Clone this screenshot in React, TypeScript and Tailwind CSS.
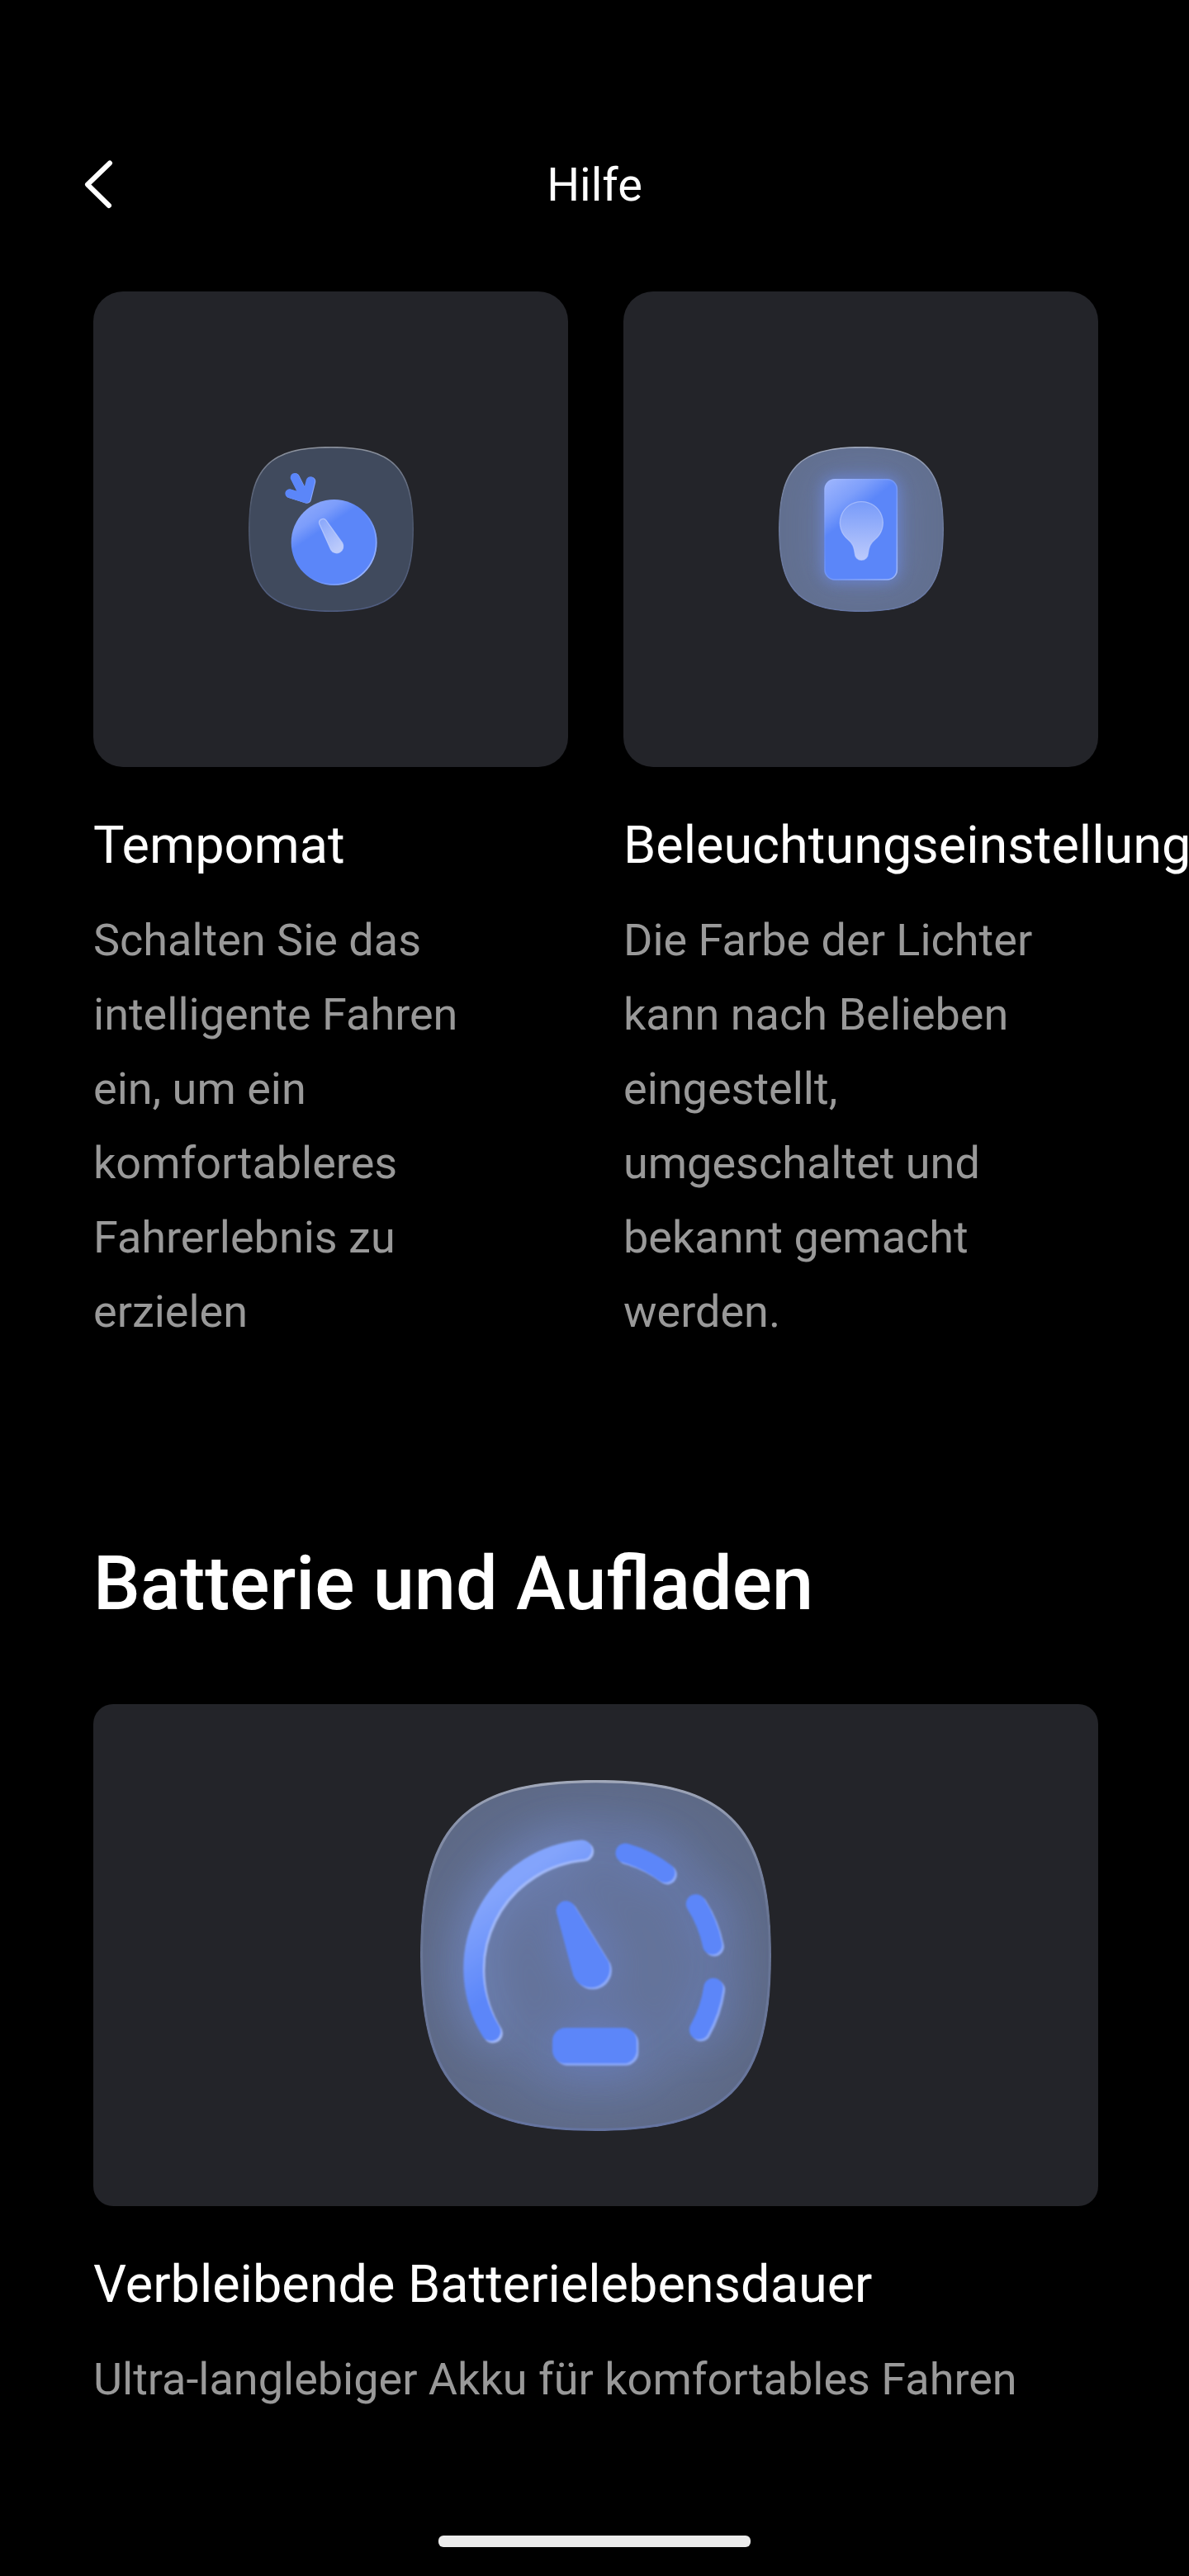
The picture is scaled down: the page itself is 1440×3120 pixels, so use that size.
import type { ReactNode } from 'react';

const SQUIRCLE =
  'M0 300C0 75 75 0 300 0C525 0 600 75 600 300C600 525 525 600 300 600C75 600 0 525 0 300Z';

type TileProps = {
  id: string;
  className: string;
  fill: string;
  children: ReactNode;
};

const Tile = ({ id, className, fill, children }: TileProps) => (
  <svg viewBox="0 0 600 600" className={className} aria-hidden="true">
    <defs>
      <clipPath id={`${id}-clip`}>
        <path d={SQUIRCLE} />
      </clipPath>
      <linearGradient id={`${id}-rim`} x1="0" y1="0" x2="0" y2="1">
        <stop offset="0" stopColor="#fff" stopOpacity="0.42" />
        <stop offset="0.4" stopColor="#b9c4e6" stopOpacity="0.1" />
        <stop offset="1" stopColor="#7389d6" stopOpacity="0.3" />
      </linearGradient>
    </defs>
    <g clipPath={`url(#${id}-clip)`}>
      <path d={SQUIRCLE} fill={fill} />
      {children}
      <path d={SQUIRCLE} fill="none" stroke={`url(#${id}-rim)`} strokeWidth="9" />
    </g>
  </svg>
);

const CruiseIcon = () => (
  <Tile id="cruise" className="size-[200px]" fill="#404a5d">
    <defs>
      <linearGradient id="cruise-dial" gradientUnits="userSpaceOnUse" x1="199" y1="199" x2="268" y2="302">
        <stop offset="0" stopColor="#8faafb" />
        <stop offset="0.6" stopColor="#7c9dfb" />
        <stop offset="1" stopColor="#5b86f9" />
      </linearGradient>
      <linearGradient id="cruise-edge" x1="0.3" y1="0.3" x2="0.95" y2="0.8">
        <stop offset="0.4" stopColor="#fff" stopOpacity="0" />
        <stop offset="1" stopColor="#fff" stopOpacity="0.4" />
      </linearGradient>
      <linearGradient id="cruise-needle" x1="0" y1="0" x2="0.6" y2="1">
        <stop offset="0" stopColor="#87a5fa" />
        <stop offset="1" stopColor="#bccbfb" />
      </linearGradient>
    </defs>
    <g fill="none" strokeWidth="32" strokeLinecap="round" strokeLinejoin="round">
      <path d="M170 113L208 188M228 126L212 190L151 171" stroke="#8aa7fa" />
      <path d="M168 112L206 187M225 125L209 189L149 170" stroke="#5b86f9" />
    </g>
    <circle cx="311" cy="348" r="156" fill="url(#cruise-dial)" />
    <circle cx="311" cy="348" r="153" fill="none" stroke="url(#cruise-edge)" strokeWidth="5" />
    <path
      d="M258 282A14 14 0 0 1 282 268L341 350A24 24 0 1 1 299 374Z"
      fill="url(#cruise-needle)"
      stroke="#c3d1fd"
      strokeOpacity="0.7"
      strokeWidth="4"
    />
  </Tile>
);

const LightIcon = () => (
  <Tile id="light" className="size-[200px]" fill="#627090">
    <defs>
      <filter id="light-glow" x="-60%" y="-60%" width="220%" height="220%">
        <feGaussianBlur stdDeviation="26" />
      </filter>
      <filter id="light-haze" x="-80%" y="-80%" width="260%" height="260%">
        <feGaussianBlur stdDeviation="70" />
      </filter>
      <linearGradient id="light-panel" gradientUnits="userSpaceOnUse" x1="205" y1="118" x2="294" y2="231">
        <stop offset="0" stopColor="#98b1fd" />
        <stop offset="0.55" stopColor="#7e9ffb" />
        <stop offset="1" stopColor="#5b86f9" />
      </linearGradient>
      <linearGradient id="light-edge" x1="0" y1="0" x2="1" y2="1">
        <stop offset="0.35" stopColor="#fff" stopOpacity="0.05" />
        <stop offset="1" stopColor="#fff" stopOpacity="0.4" />
      </linearGradient>
      <linearGradient id="light-bulb" x1="0" y1="0" x2="0" y2="1">
        <stop offset="0" stopColor="#789bf9" />
        <stop offset="1" stopColor="#bccafc" />
      </linearGradient>
    </defs>
    <rect x="150" y="100" width="300" height="400" rx="50" fill="#7486c4" opacity="0.45" filter="url(#light-haze)" />
    <rect x="160" y="111" width="278" height="380" rx="44" fill="#6a8cf0" opacity="0.6" filter="url(#light-glow)" />
    <rect x="166" y="117" width="266" height="368" rx="38" fill="url(#light-panel)" />
    <rect x="168" y="119" width="262" height="364" rx="36" fill="none" stroke="url(#light-edge)" strokeWidth="5" />
    <path
      d="M301 200A77 77 0 0 1 349 338C333 351 328 364 325 388A24 24 0 0 1 277 388C274 364 269 351 253 338A77 77 0 0 1 301 200Z"
      fill="url(#light-bulb)"
      stroke="#c3d1fd"
      strokeOpacity="0.6"
      strokeWidth="4"
    />
  </Tile>
);

const GaugeShapes = ({ color, arc }: { color: string; arc: string }) => (
  <>
    <g fill="none" strokeWidth="71" strokeLinecap="round">
      <path d="M259 915A434 434 0 0 1 590 255" stroke={arc} />
      <path d="M747 267A434 434 0 0 1 892 339" stroke={color} />
      <path d="M1003 452A434 434 0 0 1 1063 600" stroke={color} />
      <path d="M1067 757A434 434 0 0 1 1015 909" stroke={color} />
    </g>
    <path d="M497 484A35 35 0 0 1 560 456L686 662A68 68 0 1 1 558 712Z" fill={color} />
    <rect x="482" y="902" width="306" height="130" rx="48" fill={color} />
  </>
);

const GaugeIcon = () => (
  <Tile id="gauge" className="size-[425px]" fill="#5e6a87">
    <defs>
      <filter id="gauge-glow" filterUnits="userSpaceOnUse" x="-200" y="-200" width="1700" height="1700">
        <feGaussianBlur stdDeviation="85" />
      </filter>
      <filter id="gauge-soft" filterUnits="userSpaceOnUse" x="0" y="0" width="1275" height="1275">
        <feGaussianBlur stdDeviation="2.5" />
      </filter>
      <linearGradient id="gauge-arc" gradientUnits="userSpaceOnUse" x1="300" y1="400" x2="470" y2="640">
        <stop offset="0" stopColor="#83a4fc" />
        <stop offset="1" stopColor="#5b86f9" />
      </linearGradient>
    </defs>
    {/* Drawn on a 1275 grid, three units per pixel */}
    <g transform="scale(0.4706)">
      <circle cx="637" cy="650" r="540" fill="#7084bb" opacity="0.38" filter="url(#gauge-glow)" />
      <g filter="url(#gauge-glow)" opacity="0.5">
        <GaugeShapes color="#6f8ff0" arc="#86a6ff" />
      </g>
      <g filter="url(#gauge-soft)">
        <g transform="translate(5 5)">
          <GaugeShapes color="#8eaaf8" arc="#a3bafa" />
        </g>
        <g transform="translate(-2 -2)">
          <GaugeShapes color="#5b86f9" arc="url(#gauge-arc)" />
        </g>
      </g>
    </g>
  </Tile>
);

const features = [
  {
    title: 'Tempomat',
    text: 'Schalten Sie das intelligente Fahren ein, um ein komfortableres Fahrerlebnis zu erzielen',
    icon: <CruiseIcon />,
  },
  {
    title: 'Beleuchtungseinstellung',
    text: 'Die Farbe der Lichter kann nach Belieben eingestellt, umgeschaltet und bekannt gemacht werden.',
    icon: <LightIcon />,
  },
];

const Header = () => (
  <header className="grid h-20 shrink-0 grid-cols-[1fr_auto_1fr] items-center">
    <button className="ml-[101px] justify-self-start" aria-label="Zurück">
      <svg viewBox="0 0 36 60" className="h-[60px] w-9" fill="none">
        <path
          d="M32 3.5L5 29.5L31 55"
          stroke="#fff"
          strokeWidth="6"
          strokeLinecap="round"
          strokeLinejoin="round"
        />
      </svg>
    </button>
    <h1 className="text-[56px] leading-20">Hilfe</h1>
  </header>
);

const App = () => {
  return (
    <div className="flex h-[3120px] w-[1440px] flex-col overflow-hidden bg-black pt-[184px] font-['Roboto',sans-serif] text-white">
      <Header />

      <main className="mt-[89px] ml-[113px] w-[1217px]">
        <section className="grid grid-cols-2 gap-[67px]">
          {features.map((feature) => (
            <article key={feature.title} className="min-w-0">
              <div className="flex h-[576px] items-center justify-center rounded-[36px] bg-[#232429]">
                {feature.icon}
              </div>
              <h3 className="mt-[55px] text-[63px] leading-20 whitespace-nowrap">{feature.title}</h3>
              <p className="mt-[30px] max-w-[516px] text-[54px] leading-[90px] text-[#999999]">
                {feature.text}
              </p>
            </article>
          ))}
        </section>

        <section className="mt-[230px]">
          <h2 className="text-[90px] leading-[110px] font-medium">Batterie und Aufladen</h2>
          <div className="mt-[90px] flex h-[608px] items-center justify-center rounded-3xl bg-[#232429]">
            <GaugeIcon />
          </div>
          <h3 className="mt-[55px] text-[63px] leading-20">Verbleibende Batterielebensdauer</h3>
          <p className="mt-[30px] text-[54px] leading-[90px] text-[#999999]">
            Ultra-langlebiger Akku für komfortables Fahren
          </p>
        </section>
      </main>

      {/* Home indicator */}
      <div className="mx-auto mt-auto mb-[35px] h-3.5 w-[378px] shrink-0 rounded-md bg-[#ebebeb]" />
    </div>
  );
};

export default App;
